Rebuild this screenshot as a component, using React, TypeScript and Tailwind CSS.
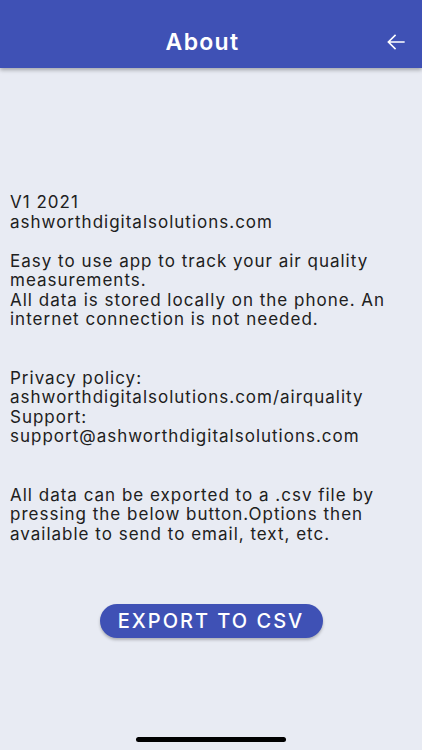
import React from 'react';

const lines: string[] = [
  'V1 2021',
  'ashworthdigitalsolutions.com',
  '',
  'Easy to use app to track your air quality',
  'measurements.',
  'All data is stored locally on the phone. An',
  'internet connection is not needed.',
  '',
  '',
  'Privacy policy:',
  'ashworthdigitalsolutions.com/airquality',
  'Support:',
  'support@ashworthdigitalsolutions.com',
  '',
  '',
  'All data can be exported to a .csv file by',
  'pressing the below button.Options then',
  'available to send to email, text, etc.',
];

function BackArrow() {
  return (
    <svg width="26" height="26" viewBox="0 0 24 24" fill="white">
      <path d="M20 11.3H6.7l5.4-5.4-1-1L3.9 12l7.2 7.1 1-1-5.4-5.4H20v-1.4z" />
    </svg>
  );
}

export default function App() {
  return (
    <div
      className="w-[422px] h-[750px] bg-[#e8ebf3] flex flex-col relative overflow-hidden"
      style={{ fontFamily: 'Inter, "Noto Sans", sans-serif' }}
    >
      <header className="h-[68px] bg-[#3f51b5] shadow-[0_2px_4px_rgba(0,0,0,0.3)] flex items-center justify-center relative z-10 pt-[16px] pr-[17px]">
        <h1 className="text-white text-[23px] font-semibold tracking-[1.3px]">About</h1>
        <button className="absolute right-[13px] top-[29px]">
          <BackArrow />
        </button>
      </header>

      <main className="flex-1 flex flex-col pt-[125px] px-[10px]">
        <div className="text-[#202020] text-[17px] leading-[19.5px] tracking-[1px]">
          {lines.map((line, i) => (
            <div key={i} className="whitespace-nowrap h-[19.5px]">
              {line}
            </div>
          ))}
        </div>

        <div className="flex justify-center mt-[60px]">
          <button className="w-[223px] h-[34px] rounded-full bg-[#3f51b5] text-white text-[20px] font-medium tracking-[2px] shadow-[0_2px_3px_rgba(0,0,0,0.25)]">
            EXPORT TO CSV
          </button>
        </div>
      </main>

      <div className="absolute bottom-[8px] left-[136px] w-[150px] h-[5px] rounded-full bg-black" />
    </div>
  );
}
